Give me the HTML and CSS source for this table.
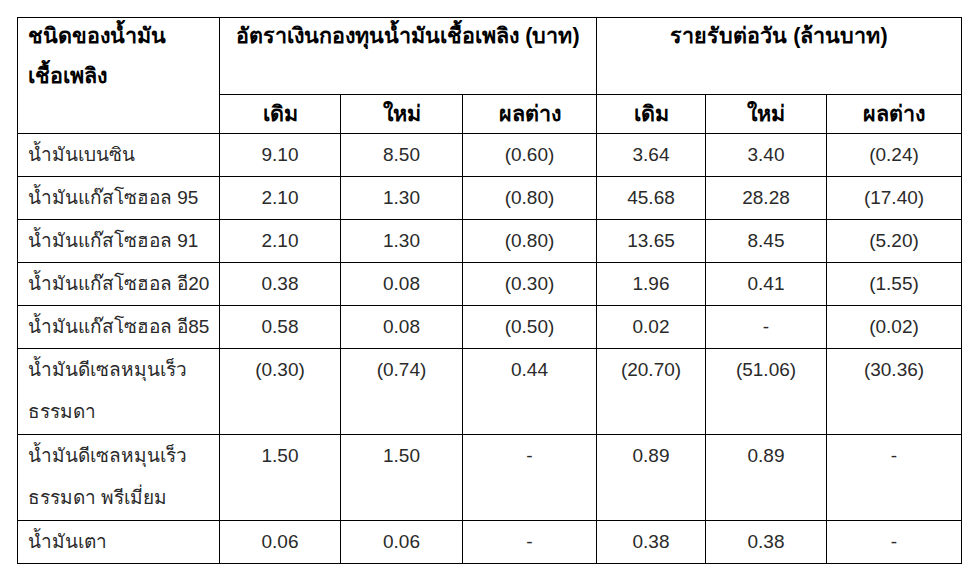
FILE: index.html
```html
<!DOCTYPE html>
<html lang="th">
<head>
<meta charset="utf-8">
<link rel="stylesheet" href="styles.css">
</head>
<body>
<table class="fund">
  <colgroup>
    <col class="c-name"><col class="c1"><col class="c2"><col class="c3"><col class="c4"><col class="c5"><col class="c6">
  </colgroup>
  <thead>
    <tr class="h1">
      <th rowspan="2" class="name"><span class="l1">ชนิดของน้ำมัน</span><span class="l2">เชื้อเพลิง</span></th>
      <th colspan="3">อัตราเงินกองทุนน้ำมันเชื้อเพลิง (บาท)</th>
      <th colspan="3">รายรับต่อวัน (ล้านบาท)</th>
    </tr>
    <tr class="h2">
      <th>เดิม</th><th>ใหม่</th><th>ผลต่าง</th>
      <th>เดิม</th><th>ใหม่</th><th>ผลต่าง</th>
    </tr>
  </thead>
  <tbody>
    <tr><td class="name">น้ำมันเบนซิน</td><td>9.10</td><td>8.50</td><td>(0.60)</td><td>3.64</td><td>3.40</td><td>(0.24)</td></tr>
    <tr><td class="name">น้ำมันแก๊สโซฮอล 95</td><td>2.10</td><td>1.30</td><td>(0.80)</td><td>45.68</td><td>28.28</td><td>(17.40)</td></tr>
    <tr><td class="name">น้ำมันแก๊สโซฮอล 91</td><td>2.10</td><td>1.30</td><td>(0.80)</td><td>13.65</td><td>8.45</td><td>(5.20)</td></tr>
    <tr><td class="name">น้ำมันแก๊สโซฮอล อี20</td><td>0.38</td><td>0.08</td><td>(0.30)</td><td>1.96</td><td>0.41</td><td>(1.55)</td></tr>
    <tr><td class="name">น้ำมันแก๊สโซฮอล อี85</td><td>0.58</td><td>0.08</td><td>(0.50)</td><td>0.02</td><td>-</td><td>(0.02)</td></tr>
    <tr class="tall"><td class="name">น้ำมันดีเซลหมุนเร็ว<br>ธรรมดา</td><td>(0.30)</td><td>(0.74)</td><td>0.44</td><td>(20.70)</td><td>(51.06)</td><td>(30.36)</td></tr>
    <tr class="tall"><td class="name">น้ำมันดีเซลหมุนเร็ว<br>ธรรมดา พรีเมี่ยม</td><td>1.50</td><td>1.50</td><td>-</td><td>0.89</td><td>0.89</td><td>-</td></tr>
    <tr><td class="name">น้ำมันเตา</td><td>0.06</td><td>0.06</td><td>-</td><td>0.38</td><td>0.38</td><td>-</td></tr>
  </tbody>
</table>
</body>
</html>
```

FILE: styles.css
```css
html, body {
  margin: 0;
  padding: 0;
  background: #ffffff;
}
body {
  padding: 17px 0 0 17px;
  font-family: "Liberation Sans", Arial, sans-serif;
  color: #2a2a2a;
}
.fund {
  border-collapse: collapse;
  width: 944px;
  table-layout: fixed;
}
.c-name { width: 202px; }
.c1 { width: 121px; }
.c2 { width: 122px; }
.c3 { width: 134px; }
.c4 { width: 109px; }
.c5 { width: 121px; }
.c6 { width: 135px; }
.fund th, .fund td {
  border: 1px solid #000;
  padding: 0;
  text-align: center;
  vertical-align: top;
}
.fund th {
  font-weight: bold;
  font-size: 21.5px;
  color: #000;
}
.h1 th {
  height: 76px;
  line-height: 36px;
}
.h1 th.name {
  text-align: left;
  padding-left: 10px;
}
.h1 th.name .l1 {
  display: block;
  line-height: 36px;
}
.h1 th.name .l2 {
  display: block;
  line-height: 44px;
}
.h2 th {
  height: 38px;
  line-height: 38px;
}
.fund td {
  font-size: 19px;
  line-height: 42px;
  height: 42px;
}
.fund td.name {
  text-align: left;
  padding-left: 10px;
}
.fund tr.tall td {
  height: 85px;
  line-height: 42px;
}
```
